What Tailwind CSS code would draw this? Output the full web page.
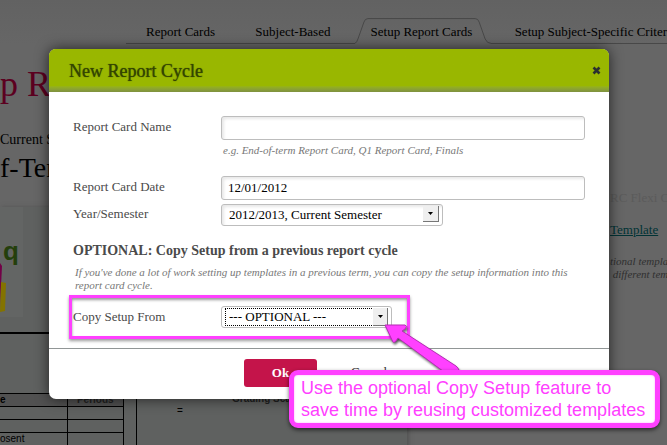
<!DOCTYPE html>
<html lang="en">
<head>
<meta charset="utf-8">
<meta name="viewport" content="width=device-width, initial-scale=1">
<title>New Report Cycle</title>
<script src="https://cdn.jsdelivr.net/npm/@tailwindcss/browser@4"></script>
</head>
<body class="relative h-screen overflow-hidden bg-[#666666] font-['Liberation_Serif',serif] text-[13px] leading-4 text-black">

<!-- Dimmed page -->
<div class="absolute inset-0 flex flex-col overflow-hidden whitespace-nowrap">
  <nav class="flex h-11 shrink-0 items-end bg-linear-to-b from-[#626262] to-[#666666] pl-[126px]">
    <a href="#" class="h-[26px] w-[110px] border-b border-[#484848] pt-[5px] pl-5 leading-[18px]">Report Cards</a>
    <a href="#" class="h-[26px] w-[120px] border-b border-[#484848] pt-[5px] pl-5 leading-[18px]">Subject-Based</a>
    <a href="#" class="relative h-[26px] w-[137px] pt-[5px] pl-4 leading-[18px]">
      <svg class="absolute inset-0 h-full w-full" viewBox="0 0 137 26" fill="none" stroke="#484848" aria-hidden="true"><path d="M0 25.5Q2 24 3 21L9 4Q10 .5 13 .5H121Q124 .5 125 4L131 21Q133 25.5 137 25.5"/></svg>
      <span class="relative">Setup Report Cards</span>
    </a>
    <a href="#" class="h-[26px] grow border-b border-[#484848] pt-[5px] pl-6 leading-[18px]">Setup Subject-Specific Criter</a>
  </nav>
  <div class="flex grow">
    <main class="flex w-[407px] shrink-0 flex-col">
      <h1 class="mt-5 h-12 text-[36px] leading-10 text-[#5c0020]">p R</h1>
      <p class="mt-5 h-4 text-[14px]">Current S</p>
      <h2 class="mt-1 h-8 text-[28px] leading-8">f-Ter</h2>
      <section class="mt-[23px] flex grow flex-col bg-[#5f6160] font-['Liberation_Sans',sans-serif] text-[10px] leading-3 shadow-[2px_0_4px_#4448]">
        <svg class="h-[110px] w-[23px]" viewBox="0 0 23 110" role="img" aria-label="Logo">
          <rect y="0" width="23" height="110" fill="#636564"/>
          <path d="M0 56L2 59L0 100Z" fill="#720047"/>
          <path d="M1 75L6 76L5 104L0 105Z" fill="#837300"/>
          <text x="3" y="53" font-family="Liberation Sans, sans-serif" font-weight="700" font-size="26" fill="#243f0c">q</text>
        </svg>
        <div class="mt-[15px] h-[2px] shrink-0 bg-black"></div>
        <div class="mt-[59px] flex h-[60px] shrink-0">
          <table class="h-[53px] w-[124px] table-fixed border-collapse">
            <colgroup><col class="w-[67px]"><col></colgroup>
            <tbody>
              <tr class="h-[13px] bg-[#515151]"><th class="border border-l-0 border-black p-0 text-left">e</th><th class="border border-black p-0 text-center text-[#222]">Periods</th></tr>
              <tr class="h-[13px]"><td class="border border-l-0 border-black p-0"></td><td class="border border-black p-0"></td></tr>
              <tr class="h-[13px]"><td class="border border-l-0 border-black p-0"></td><td class="border border-black p-0"></td></tr>
              <tr class="h-[13px]"><td class="border border-l-0 border-black p-0">osent</td><td class="border border-black p-0"></td></tr>
            </tbody>
          </table>
          <div class="ml-3 flex grow border-l border-black">
            <span class="w-[95px] pt-3 pl-10">=</span>
            <span class="font-bold text-[#222]">Grading Scale</span>
          </div>
        </div>
      </section>
    </main>
    <aside class="ml-[203px] flex grow flex-col pt-[144px]">
      <h3 class="leading-5 text-[#5b5b5b]">RC Flexi Cr</h3>
      <a href="#" class="mt-3 text-[13px] leading-5 text-[#003335] underline">Template</a>
      <p class="mt-[15px] text-[11px] leading-[13px] text-[#303030] italic">tional templa<br>&nbsp;different tem</p>
    </aside>
  </div>
</div>

<!-- Dialog -->
<div class="relative pt-[49px] pr-[58px] pl-[49px]">
  <div role="dialog" aria-labelledby="dialog-title" class="overflow-hidden rounded-[7px] bg-white text-[#4a4a4a] shadow-[0_0_14px_rgba(0,0,0,0.65)]">
    <header class="flex h-[43px] items-center justify-between bg-[#99b700] bg-linear-to-b from-[#99b700] from-85% to-[#7f9140] pr-2 pl-5">
      <h1 id="dialog-title" class="text-[18px] leading-6 text-[#344500] [text-shadow:0_0_1px_#344500]">New Report Cycle</h1>
      <button type="button" aria-label="Close" class="flex h-5 w-[10px] items-center justify-center">
        <svg width="9" height="9" viewBox="0 0 9 9" aria-hidden="true"><path d="M1.5 1.5L7.5 7.5M7.5 1.5L1.5 7.5" stroke="#2b3030" stroke-width="2.6"/></svg>
      </button>
    </header>

    <form>
      <div class="px-6 pt-6 pb-5">
        <div class="grid grid-cols-[148px_1fr]">
          <label for="card-name" class="pt-[3px]">Report Card Name</label>
          <div>
            <input id="card-name" type="text" class="block h-6 w-full rounded-[3px] border border-[#bdbdbd] px-[6px] text-black shadow-[inset_2px_2px_3px_#e8e8e8]">
            <p class="mt-[2px] pl-[2px] text-[11px] leading-4 text-[#777] italic">e.g. End-of-term Report Card, Q1 Report Card, Finals</p>
          </div>
          <label for="card-date" class="mt-[18px] pt-[3px]">Report Card Date</label>
          <input id="card-date" type="text" value="12/01/2012" class="mt-[18px] block h-6 w-full rounded-[3px] border border-[#bdbdbd] px-[6px] text-black shadow-[inset_2px_2px_3px_#e8e8e8]">
          <label for="semester" class="mt-1 pt-[2px]">Year/Semester</label>
          <div class="relative mt-1 w-[222px]">
            <select id="semester" class="block h-[22px] w-full appearance-none rounded-[3px] border border-[#bdbdbd] pr-6 pl-[7px] text-black shadow-[inset_2px_2px_3px_#e8e8e8]"><option>2012/2013, Current Semester</option></select>
            <span class="pointer-events-none absolute top-[2px] right-1 flex h-4 w-4 items-center justify-center border-r border-b border-[#777] bg-[#efefef]"><svg width="5" height="3" viewBox="0 0 5 3" aria-hidden="true"><path d="M0 0H5L2.5 3Z"/></svg></span>
          </div>
        </div>
        <h2 class="mt-[17px] text-[14px] leading-4 font-bold">OPTIONAL: Copy Setup from a previous report cycle</h2>
        <p class="mt-[7px] pl-[2px] text-[11px] leading-[13px] text-[#777] italic">If you've done a lot of work setting up templates in a previous term, you can copy the setup information into this<br>report card cycle.</p>
        <div class="relative mt-[14px] grid grid-cols-[148px_1fr]">
          <div class="pointer-events-none absolute -top-[11px] -left-1 h-11 w-[341px] border-3 border-[#ff40ff] shadow-[0_2px_3px_#0006,inset_0_2px_3px_#0006]"></div>
          <label for="copy-from" class="pt-[3px]">Copy Setup From</label>
          <div class="relative w-[171px]">
            <select id="copy-from" class="block h-[22px] w-full appearance-none rounded-[3px] border border-[#bdbdbd] pr-6 pl-[7px] text-black"><option>--- OPTIONAL ---</option></select>
            <span class="pointer-events-none absolute top-[2px] right-1 left-1 h-[18px] border border-dotted border-black"></span>
            <span class="pointer-events-none absolute top-[2px] right-1 flex h-[18px] w-[15px] items-center justify-center border-r border-b border-[#777] bg-[#efefef]"><svg width="5" height="3" viewBox="0 0 5 3" aria-hidden="true"><path d="M0 0H5L2.5 3Z"/></svg></span>
          </div>
        </div>
      </div>
      <footer class="flex h-[51px] items-start gap-[34px] border-t border-[#919696] pt-[10px] pl-[195px]">
        <button type="submit" class="h-7 w-[73px] rounded-[3px] bg-[#c4144a] font-bold text-white">Ok</button>
        <button type="button" class="h-[26px] text-[13px] text-[#333]">Cancel</button>
      </footer>
    </form>
  </div>
</div>

<!-- Annotation -->
<svg class="absolute top-[318px] left-[380px] drop-shadow-[1px_2px_1px_#0008]" width="86" height="62" viewBox="0 0 86 62" aria-hidden="true"><path d="M5 7L25 7Q28 8 25 11L22 13L76 48Q81 52 78 57Q76 61 71 59L18 20L16 23Q13 26 12 22Z" fill="#ff40ff" stroke="#b52cb5"/></svg>
<p class="absolute top-[370px] left-[289px] rounded-[9px] border-5 border-[#ff40ff] bg-white py-[2px] pr-[10px] pl-[7px] font-['Liberation_Sans',sans-serif] text-[18px] leading-[22px] whitespace-nowrap text-[#ff40ff] shadow-[0_2px_4px_#0009,inset_0_0_2px_#ff9cff]">Use the optional Copy Setup feature to<br>save time by reusing customized templates</p>
</body>
</html>
